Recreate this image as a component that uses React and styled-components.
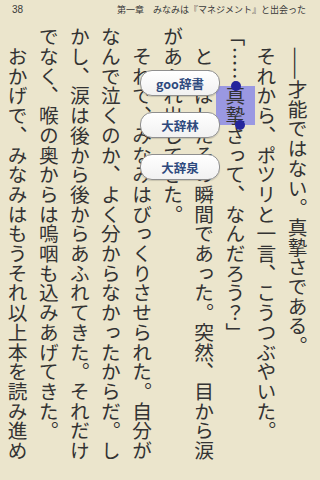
import React from 'react';
import styled, { createGlobalStyle } from 'styled-components';

const Global = createGlobalStyle`
  html, body { margin: 0; padding: 0; background: #ebe5cc; }
  body { width: 320px; height: 480px; overflow: hidden; }
`;

const Page = styled.div`
  position: relative;
  width: 320px;
  height: 480px;
  background: #ebe5cc;
  display: flex;
  flex-direction: column;
  font-family: "Noto Sans CJK JP", sans-serif;
  color: #333333;
  overflow: hidden;
`;

const Header = styled.header`
  display: flex;
  justify-content: space-between;
  align-items: center;
  height: 18px;
  padding: 0 14px 0 12px;
  color: #3a3a3a;
`;

const PageNo = styled.span`
  font-family: "Liberation Sans", sans-serif;
  font-size: 10px;
`;

const Chapter = styled.span`
  font-family: "Noto Sans CJK JP", sans-serif;
  font-size: 9px;
`;

const Columns = styled.div`
  writing-mode: vertical-rl;
  height: 434px;
  margin-top: 9px;
  padding-right: 7px;
  font-size: 19.7px;
  line-height: 31.1px;
`;

const Col = styled.div`
  white-space: pre;
`;

const Sel = styled.span`
  position: relative;
  padding: 0 5px;
  background: rgba(100, 100, 240, 0.6);
`;

const Handle = styled.i`
  position: absolute;
  width: 10px;
  height: 10px;
  margin-left: -5px;
  border-radius: 50%;
  background: #25259c;
  ${p => (p.$end ? 'bottom: -5px; left: calc(50% + 5px);' : 'top: -5px; left: calc(50% + 1px);')}
`;

const Menu = styled.div`
  position: absolute;
  left: 140px;
  top: 70px;
  width: 80px;
  display: flex;
  flex-direction: column;
  gap: 16px;
`;

const DictButton = styled.div`
  height: 24px;
  border: 1px solid #8f8f8f;
  border-radius: 12px;
  background: linear-gradient(#ffffff, #f1f1f1);
  box-shadow: 0 1px 1px rgba(0, 0, 0, 0.15);
  display: flex;
  align-items: center;
  justify-content: center;
  font-family: "Noto Sans CJK JP", sans-serif;
  font-weight: 700;
  font-size: 12.5px;
  color: #2f4a7e;
`;

const cols = [
  '　——才能ではない。真摯さである。',
  '　それから、ポツリと一言、こうつぶやいた。',
  null,
  '　とこぼしたその瞬間であった。突然、目から涙',
  'があふれ出してきた。',
  '　それで、みなみはびっくりさせられた。自分が',
  'なんで泣くのか、よく分からなかったからだ。し',
  'かし、涙は後から後からあふれてきた。それだけ',
  'でなく、喉の奥からは嗚咽も込みあげてきた。',
  '　おかげで、みなみはもうそれ以上本を読み進め',
];

export default function App() {
  return (
    <Page>
      <Global />
      <Header>
        <PageNo>38</PageNo>
        <Chapter>第一章　みなみは『マネジメント』と出会った</Chapter>
      </Header>
      <Columns>
        {cols.map((c, i) =>
          c === null ? (
            <Col key={i}>
              「……
              <Sel>
                <Handle />
                真摯
                <Handle $end />
              </Sel>
              さって、なんだろう？」
            </Col>
          ) : (
            <Col key={i}>{c}</Col>
          )
        )}
      </Columns>
      <Menu>
        <DictButton>goo辞書</DictButton>
        <DictButton>大辞林</DictButton>
        <DictButton>大辞泉</DictButton>
      </Menu>
    </Page>
  );
}
